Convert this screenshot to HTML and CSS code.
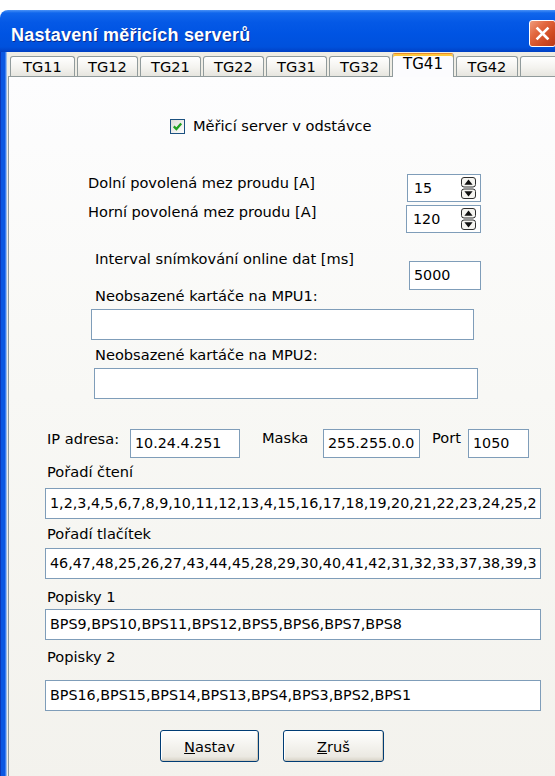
FILE: index.html
```html
<!DOCTYPE html>
<html lang="cs">
<head>
<meta charset="utf-8">
<title>Nastavení měřicích serverů</title>
<link rel="stylesheet" href="styles.css">
</head>
<body>
<div class="window">
  <div class="titlebar">
    <span class="title">Nastavení měřicích serverů</span>
    <span class="close-btn">
      <svg width="15" height="15" viewBox="0 0 15 15" aria-hidden="true">
        <path d="M2.5 2.5 L12.5 12.5 M12.5 2.5 L2.5 12.5" stroke="#fff" stroke-width="2.6" stroke-linecap="square"/>
      </svg>
    </span>
  </div>
  <div class="frame">
    <div class="tabs">
      <div class="tab first">TG11</div>
      <div class="tab">TG12</div>
      <div class="tab">TG21</div>
      <div class="tab">TG22</div>
      <div class="tab">TG31</div>
      <div class="tab">TG32</div>
      <div class="tab active">TG41</div>
      <div class="tab wide">TG42</div>
      <div class="tab stub"></div>
    </div>
    <div class="panel">
      <div class="opt">
        <svg class="checkbox" width="15" height="15" viewBox="0 0 15 15" aria-hidden="true">
          <defs>
            <linearGradient id="cb-fill" x1="0" y1="0" x2="1" y2="1">
              <stop offset="0" stop-color="#dcdcd5"/>
              <stop offset="1" stop-color="#ffffff"/>
            </linearGradient>
          </defs>
          <rect x="0.5" y="0.5" width="14" height="14" fill="url(#cb-fill)" stroke="#1c5180"/>
          <path d="M3.8 7.4 L6.4 10 L11.2 4.6" fill="none" stroke="#21a121" stroke-width="2.3"/>
        </svg>
        <span>Měřicí server v odstávce</span>
      </div>

      <div class="row row-low">
        <span class="lbl">Dolní povolená mez proudu [A]</span>
        <div class="field spin">
          <span>15</span>
          <svg class="spin-arrows" width="17" height="24" viewBox="0 0 17 24" aria-hidden="true">
            <rect x="1.5" y="1.5" width="14" height="9.5" rx="2.5" fill="#f6f5f1" stroke="#2e2e2e"/>
            <rect x="1.5" y="13" width="14" height="9.5" rx="2.5" fill="#f6f5f1" stroke="#2e2e2e"/>
            <path d="M8.5 3.4 L12.6 8.8 H4.4 Z" fill="#111"/>
            <path d="M8.5 20.6 L12.6 15.2 H4.4 Z" fill="#111"/>
          </svg>
        </div>
      </div>

      <div class="row row-high">
        <span class="lbl">Horní povolená mez proudu [A]</span>
        <div class="field spin">
          <span>120</span>
          <svg class="spin-arrows" width="17" height="24" viewBox="0 0 17 24" aria-hidden="true">
            <rect x="1.5" y="1.5" width="14" height="9.5" rx="2.5" fill="#f6f5f1" stroke="#2e2e2e"/>
            <rect x="1.5" y="13" width="14" height="9.5" rx="2.5" fill="#f6f5f1" stroke="#2e2e2e"/>
            <path d="M8.5 3.4 L12.6 8.8 H4.4 Z" fill="#111"/>
            <path d="M8.5 20.6 L12.6 15.2 H4.4 Z" fill="#111"/>
          </svg>
        </div>
      </div>

      <div class="row row-interval">
        <span class="lbl">Interval snímkování online dat [ms]</span>
        <div class="field interval">5000</div>
      </div>

      <div class="caption cap-mpu1">Neobsazené kartáče na MPU1:</div>
      <div class="field mpu1"></div>
      <div class="caption cap-mpu2">Neobsazené kartáče na MPU2:</div>
      <div class="field mpu2"></div>

      <div class="row row-ip">
        <span class="lbl ip-lbl">IP adresa:</span>
        <div class="field ip">10.24.4.251</div>
        <span class="lbl mask-lbl">Maska</span>
        <div class="field mask">255.255.0.0</div>
        <span class="lbl port-lbl">Port</span>
        <div class="field port">1050</div>
      </div>

      <div class="caption cap-read">Pořadí čtení</div>
      <div class="field long f-read"><span class="clip">1,2,3,4,5,6,7,8,9,10,11,12,13,4,15,16,17,18,19,20,21,22,23,24,25,26,27,28</span></div>
      <div class="caption cap-keys">Pořadí tlačítek</div>
      <div class="field long f-keys"><span class="clip">46,47,48,25,26,27,43,44,45,28,29,30,40,41,42,31,32,33,37,38,39,34,35,36</span></div>
      <div class="caption cap-desc1">Popisky 1</div>
      <div class="field long f-desc1"><span class="clip">BPS9,BPS10,BPS11,BPS12,BPS5,BPS6,BPS7,BPS8</span></div>
      <div class="caption cap-desc2">Popisky 2</div>
      <div class="field long f-desc2"><span class="clip">BPS16,BPS15,BPS14,BPS13,BPS4,BPS3,BPS2,BPS1</span></div>

      <div class="actions">
        <button class="btn btn-ok" type="button"><u>N</u>astav</button>
        <button class="btn btn-cancel" type="button"><u>Z</u>ruš</button>
      </div>
    </div>
  </div>
</div>
</body>
</html>
```

FILE: styles.css
```css
html, body {
  margin: 0;
  padding: 0;
}

body {
  width: 555px;
  height: 776px;
  overflow: hidden;
  background: #ffffff;
  font-family: "DejaVu Sans", "Liberation Sans", sans-serif;
  font-size: 14.6px;
  color: #000;
}

/* ---------- window chrome ---------- */
.window {
  width: 563px;
  margin-top: 10px;
}

.titlebar {
  height: 42px;
  box-sizing: border-box;
  display: flex;
  align-items: center;
  justify-content: space-between;
  padding-left: 11px;
  border-radius: 8px 8px 0 0;
  background: linear-gradient(to bottom,
    #4a92f6 0,
    #1066ec 3px,
    #0559e6 12px,
    #0054e3 55%,
    #0051dc 88%,
    #0140c4 100%);
}

.title {
  margin-top: 9px;
  color: #fff;
  font-family: "Liberation Sans", Arial, sans-serif;
  font-weight: bold;
  font-size: 18px;
  letter-spacing: 0.2px;
  text-shadow: 1px 1px 0 #0b2a8e;
}

.close-btn {
  align-self: flex-start;
  margin-top: 10px;
  margin-right: 7px;
  width: 27px;
  height: 27px;
  box-sizing: border-box;
  border: 1px solid #fff;
  border-radius: 3px;
  background: linear-gradient(135deg, #ef9c7e 0%, #e2683f 35%, #cf4a22 70%, #b9391a 100%);
  display: flex;
  align-items: center;
  justify-content: center;
}

.frame {
  padding: 1px 0 0 7px;
  height: 724px;
  background: linear-gradient(to right,
    #0a37b8 0 1px,
    #0b57e2 1px 5px,
    #3c80ef 5px 6px,
    #98b9ee 6px 7px,
    #efede5 7px);
}

/* ---------- tabs ---------- */
.tabs {
  display: flex;
  align-items: flex-end;
  gap: 2px;
  height: 23px;
  padding-left: 3px;
}

.tab {
  box-sizing: border-box;
  flex: none;
  width: 61px;
  height: 20px;
  border: 1px solid #919b9c;
  border-bottom: 0;
  border-radius: 3px 3px 0 0;
  background: linear-gradient(to bottom, #ffffff, #f4f3ef 55%, #e6e5df);
  text-align: center;
  line-height: 19px;
  font-size: 14.6px;
  color: #000;
}

.tab.first { width: 65px; }
.tab.wide { width: 62px; }
.tab.stub { width: 40px; }

.tab.active {
  position: relative;
  z-index: 1;
  width: 62px;
  height: 24px;
  margin-bottom: -1px;
  border-top: 1px solid #e68b2c;
  box-shadow: inset 0 2px 0 #ffc83c;
  background: #fcfcfe;
  line-height: 20px;
  font-size: 15px;
}

.panel {
  width: 560px;
  height: 706px;
  margin-left: 1px;
  border: 1px solid #919b9c;
  background: linear-gradient(to bottom, #fdfdfe 0%, #f8f8f5 45%, #f3f2ed 100%);
}

/* ---------- form content ---------- */
.opt {
  display: flex;
  align-items: center;
  gap: 8px;
  height: 18px;
  line-height: 18px;
  margin: 40px 0 0 161px;
}

.checkbox { flex: none; }

.row {
  display: flex;
  align-items: flex-start;
}

.lbl {
  flex: none;
  line-height: 18px;
  white-space: nowrap;
}

.field {
  flex: none;
  box-sizing: border-box;
  border: 1px solid #7f9db9;
  background: #fff;
  padding: 0 4px;
  white-space: nowrap;
  overflow: hidden;
  font-size: 14.3px;
}

.clip {
  display: block;
  overflow: hidden;
}

.spin {
  display: flex;
  align-items: center;
  justify-content: space-between;
  height: 28px;
  padding: 0 3px 0 6px;
  line-height: 26px;
}

.row-low { margin-top: 39px; }
.row-low .lbl { margin: 0 0 0 79px; width: 319px; }
.row-low .spin { width: 74px; }

.row-high { margin-top: 3px; }
.row-high .lbl { margin: -2px 0 0 79px; width: 318px; }
.row-high .spin { width: 75px; }

.row-interval { margin-top: 17px; }
.row-interval .lbl { margin-left: 86px; width: 314px; }
.interval {
  margin-top: 11px;
  width: 72px;
  height: 29px;
  line-height: 27px;
}

.caption {
  line-height: 18px;
  white-space: nowrap;
}

.cap-mpu1 { margin: -3px 0 0 86px; }
.cap-mpu2 { margin: 6px 0 0 86px; }

.mpu1 { margin: 4px 0 0 82px; width: 383px; height: 31px; }
.mpu2 { margin: 4px 0 0 85px; width: 384px; height: 31px; }

.row-ip { margin-top: 30px; height: 29px; }
.row-ip .field { height: 29px; line-height: 27px; }
.ip-lbl { margin: 1px 0 0 38px; width: 83px; }
.ip { width: 110px; }
.mask-lbl { margin-left: 22px; width: 61px; }
.mask { width: 97px; }
.port-lbl { margin-left: 12px; width: 36px; }
.port { width: 61px; }

.cap-read { margin: 5px 0 0 38px; }
.cap-keys { margin: 6px 0 0 38px; }
.cap-desc1 { margin: 9px 0 0 38px; }
.cap-desc2 { margin: 8px 0 0 38px; }

.long {
  margin-left: 36px;
  width: 496px;
  height: 31px;
  line-height: 29px;
}

.f-read { margin-top: 7px; }
.f-keys { margin-top: 5px; }
.f-desc1 { margin-top: 3px; }
.f-desc2 { margin-top: 14px; }

/* ---------- buttons ---------- */
.actions {
  display: flex;
  margin-top: 19px;
}

.btn {
  box-sizing: border-box;
  height: 32px;
  border: 1px solid #003c74;
  border-radius: 3px;
  background: linear-gradient(to bottom, #ffffff 0%, #f6f5f1 40%, #ebe9e2 85%, #d8d3c7 100%);
  box-shadow: inset -1px -1px 0 #d2cbbd, inset 1px 1px 0 #fff;
  font-family: "DejaVu Sans", "Liberation Sans", sans-serif;
  font-size: 14.6px;
  color: #000;
  padding: 0;
}

.btn-ok { margin-left: 151px; width: 99px; }
.btn-cancel { margin-left: 24px; width: 101px; }
```
